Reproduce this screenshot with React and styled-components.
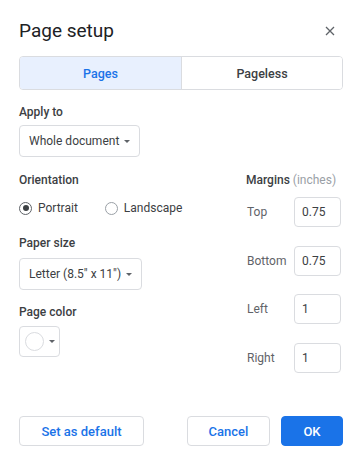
import React, { useState } from 'react';
import styled, { createGlobalStyle } from 'styled-components';

const GlobalStyle = createGlobalStyle`
  html, body {
    margin: 0;
    padding: 0;
    background: #fff;
  }
  body {
    font-family: Roboto, "Liberation Sans", Arial, sans-serif;
    color: #3c4043;
  }
`;

const Dialog = styled.div`
  width: 360px;
  height: 466px;
  box-sizing: border-box;
  padding: 17px 17px 0 19px;
  display: flex;
  flex-direction: column;
`;

const Header = styled.div`
  display: flex;
  align-items: center;
  justify-content: space-between;
  height: 28px;
`;

const Title = styled.h1`
  margin: 0;
  font-size: 19px;
  font-weight: 400;
  line-height: 28px;
  color: #202124;
`;

const CloseButton = styled.button`
  width: 24px;
  height: 24px;
  margin-right: 1px;
  padding: 0;
  border: none;
  background: transparent;
  display: flex;
  align-items: center;
  justify-content: center;
  cursor: pointer;
`;

const Toggle = styled.div`
  margin-top: 11px;
  display: grid;
  grid-template-columns: 1fr 1fr;
  height: 32px;
  border: 1px solid #dadce0;
  border-radius: 4px;
  overflow: hidden;
`;

const ToggleOption = styled.button`
  border: none;
  border-left: ${(p) => (p.$first ? 'none' : '1px solid #dadce0')};
  background: ${(p) => (p.$active ? '#e8f0fe' : '#fff')};
  color: ${(p) => (p.$active ? '#1a73e8' : '#3c4043')};
  font-family: inherit;
  font-size: 12.5px;
  font-weight: 500;
  cursor: pointer;
`;

const Label = styled.div`
  font-size: 12px;
  font-weight: 500;
  line-height: 16px;
  color: #3c4043;
  margin-top: ${(p) => p.$mt || 0}px;
  margin-bottom: ${(p) => p.$mb || 0}px;
`;

const Muted = styled.span`
  font-weight: 400;
  color: #9aa0a6;
`;

const Select = styled.button`
  display: inline-flex;
  align-items: center;
  gap: 5px;
  height: 32px;
  box-sizing: border-box;
  padding: 0 9px 0 9px;
  border: 1px solid #dadce0;
  border-radius: 4px;
  background: #fff;
  font-family: inherit;
  font-size: 12px;
  color: #3c4043;
  cursor: pointer;
  align-self: flex-start;
`;

const Caret = styled.span`
  width: 0;
  height: 0;
  border-left: 3px solid transparent;
  border-right: 3px solid transparent;
  border-top: 3px solid #5f6368;
`;

const Columns = styled.div`
  display: flex;
  margin-top: 15px;
`;

const LeftCol = styled.div`
  flex: 1;
  display: flex;
  flex-direction: column;
`;

const RightCol = styled.div`
  width: 95px;
  margin-right: 2px;
  display: flex;
  flex-direction: column;
`;

const RadioRow = styled.div`
  display: flex;
  align-items: center;
  height: 20px;
  margin-top: 10px;
  gap: 27px;
`;

const RadioLabel = styled.label`
  display: flex;
  align-items: center;
  gap: 6px;
  font-size: 12px;
  color: #3c4043;
  cursor: pointer;
`;

const RadioCircle = styled.span`
  width: 13px;
  height: 13px;
  box-sizing: border-box;
  border-radius: 50%;
  border: 1px solid ${(p) => (p.$checked ? '#5f6368' : '#9aa0a6')};
  display: flex;
  align-items: center;
  justify-content: center;
  &::after {
    content: '';
    width: 6px;
    height: 6px;
    border-radius: 50%;
    background: ${(p) => (p.$checked ? '#3c4043' : 'transparent')};
  }
`;

const ColorSelect = styled(Select)`
  width: 41px;
  height: 31px;
  padding: 0 0 0 5px;
  gap: 5px;
`;

const Swatch = styled.span`
  width: 19px;
  height: 19px;
  box-sizing: border-box;
  border-radius: 50%;
  border: 1px solid #dadce0;
  background: #fff;
`;

const MarginList = styled.div`
  display: flex;
  flex-direction: column;
  gap: 18.5px;
  margin-top: 9px;
`;

const MarginRow = styled.div`
  display: flex;
  align-items: center;
  justify-content: space-between;
`;

const MarginLabel = styled.span`
  font-size: 12px;
  color: #5f6368;
  margin-left: 1px;
`;

const MarginInput = styled.input`
  width: 47px;
  height: 30px;
  box-sizing: border-box;
  border: 1px solid #dadce0;
  border-radius: 4px;
  padding: 0 7px;
  font-family: inherit;
  font-size: 12px;
  color: #3c4043;
  outline: none;
`;

const Footer = styled.div`
  margin-top: auto;
  margin-bottom: 20px;
  display: flex;
  align-items: center;
`;

const Button = styled.button`
  height: 30px;
  width: ${(p) => p.$w}px;
  box-sizing: border-box;
  border-radius: 4px;
  border: 1px solid ${(p) => (p.$primary ? '#1a73e8' : '#dadce0')};
  background: ${(p) => (p.$primary ? '#1a73e8' : '#fff')};
  color: ${(p) => (p.$primary ? '#fff' : '#1a73e8')};
  font-family: inherit;
  font-size: 13px;
  font-weight: 500;
  cursor: pointer;
  margin-left: ${(p) => p.$ml || 0}px;
`;

const margins = [
  { name: 'Top', value: '0.75' },
  { name: 'Bottom', value: '0.75' },
  { name: 'Left', value: '1' },
  { name: 'Right', value: '1' },
];

const App = () => {
  const [mode, setMode] = useState('pages');
  const [orientation, setOrientation] = useState('portrait');

  return (
    <Dialog>
      <GlobalStyle />
      <Header>
        <Title>Page setup</Title>
        <CloseButton aria-label="Close">
          <svg width="10" height="10" viewBox="0 0 10 10">
            <path d="M1 1 L9 9 M9 1 L1 9" stroke="#5f6368" strokeWidth="1.3" />
          </svg>
        </CloseButton>
      </Header>

      <Toggle>
        <ToggleOption $first $active={mode === 'pages'} onClick={() => setMode('pages')}>
          Pages
        </ToggleOption>
        <ToggleOption $active={mode === 'pageless'} onClick={() => setMode('pageless')}>
          Pageless
        </ToggleOption>
      </Toggle>

      <Label $mt={14} $mb={5}>Apply to</Label>
      <Select>
        Whole document <Caret />
      </Select>

      <Columns>
        <LeftCol>
          <Label>Orientation</Label>
          <RadioRow>
            <RadioLabel onClick={() => setOrientation('portrait')}>
              <RadioCircle $checked={orientation === 'portrait'} />
              Portrait
            </RadioLabel>
            <RadioLabel onClick={() => setOrientation('landscape')}>
              <RadioCircle $checked={orientation === 'landscape'} />
              Landscape
            </RadioLabel>
          </RadioRow>

          <Label $mt={17} $mb={7}>Paper size</Label>
          <Select>
            Letter (8.5" x 11") <Caret />
          </Select>

          <Label $mt={14} $mb={6}>Page color</Label>
          <ColorSelect>
            <Swatch />
            <Caret />
          </ColorSelect>
        </LeftCol>

        <RightCol>
          <Label>
            Margins <Muted>(inches)</Muted>
          </Label>
          <MarginList>
            {margins.map((m) => (
              <MarginRow key={m.name}>
                <MarginLabel>{m.name}</MarginLabel>
                <MarginInput defaultValue={m.value} />
              </MarginRow>
            ))}
          </MarginList>
        </RightCol>
      </Columns>

      <Footer>
        <Button $w={125}>Set as default</Button>
        <Button $w={83} $ml={43}>Cancel</Button>
        <Button $w={62} $ml={11} $primary>OK</Button>
      </Footer>
    </Dialog>
  );
};

export default App;
